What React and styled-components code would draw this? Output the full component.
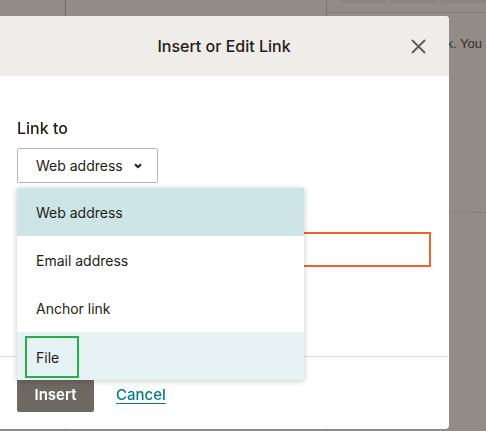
import React from "react";
import styled, { createGlobalStyle } from "styled-components";

const GlobalStyle = createGlobalStyle`
  html, body {
    margin: 0;
    padding: 0;
    height: 100%;
    overflow: hidden;
  }
  body {
    font-family: Inter, "Noto Sans", sans-serif;
    background: #918c88;
    color: #241c15;
  }
`;

const Backdrop = styled.div`
  display: flex;
  height: 100vh;
  background: #918c88;
`;

const Rail = styled.div`
  width: 65px;
  border-right: 1px solid #6f6a66;
`;

const Canvas = styled.div`
  width: 260px;
  border-right: 1px solid #7a7571;
`;

const Aside = styled.div`
  flex: 1;
  display: flex;
  flex-direction: column;
  min-width: 0;
`;

const Toolbar = styled.div`
  height: 12px;
  display: flex;
  gap: 4px;
  padding-left: 15px;
  border-bottom: 1px solid #7f7a76;
`;

const ToolButton = styled.div`
  width: 62px;
  height: 2px;
  background: #8a8581;
  border: 1px solid #84807c;
  border-top: none;
  border-radius: 0 0 3px 3px;
`;

const HelpText = styled.p`
  margin: 21px 0 0;
  padding-right: 4px;
  font: 13px/20px "Liberation Sans", Arial, sans-serif;
  color: #332e2b;
  text-align: right;
  white-space: nowrap;
`;

const DashedRule = styled.div`
  margin-top: 158px;
  border-top: 1px dashed #7c7773;
`;

const Modal = styled.div`
  position: fixed;
  top: 16px;
  left: 0;
  width: 449px;
  height: 413px;
  display: flex;
  flex-direction: column;
  background: #fff;
  border-radius: 0 4px 4px 0;
`;

const Header = styled.div`
  height: 60px;
  flex-shrink: 0;
  display: grid;
  grid-template-columns: 1fr auto 1fr;
  align-items: center;
  padding: 0 23px 0 22px;
  background: #eeede9;
  border-radius: 0 4px 0 0;
`;

const Title = styled.h2`
  grid-column: 2;
  margin: 0;
  font-size: 16px;
  font-weight: 500;
  color: #241c15;
`;

const CloseButton = styled.button`
  grid-column: 3;
  justify-self: end;
  display: flex;
  padding: 0;
  border: none;
  background: none;
  color: #5e5954;
`;

const Body = styled.div`
  flex: 1;
  padding: 40px 17px 0;
`;

const Label = styled.div`
  font-size: 16px;
  line-height: 24px;
  font-weight: 500;
`;

const SelectWrap = styled.div`
  position: relative;
  margin-top: 8px;
`;

const SelectButton = styled.button`
  width: 141px;
  height: 35px;
  display: flex;
  align-items: center;
  gap: 11px;
  padding: 0 0 0 18px;
  background: #fff;
  border: 1px solid #b9b7b4;
  border-radius: 2px;
  font: inherit;
  font-size: 14px;
  color: #241c15;
`;

const Menu = styled.ul`
  position: absolute;
  z-index: 2;
  top: 40px;
  left: 0;
  width: 287px;
  margin: 0;
  padding: 0;
  list-style: none;
  background: #fff;
  box-shadow: 0 1px 6px rgba(0, 0, 0, 0.22);
`;

const MenuItem = styled.li`
  height: 48px;
  display: flex;
  align-items: center;
  padding-left: 19px;
  font-size: 14px;
  color: #241c15;
  background: ${({ $tone }) =>
    $tone === "selected" ? "#cde5e6" : $tone === "hover" ? "#e6f1f3" : "#fff"};
`;

const FocusRing = styled.span`
  display: flex;
  align-items: center;
  width: 41px;
  height: 38px;
  margin: 2px 0 0 -11px;
  padding-left: 9px;
  border: 2px solid #26ae4b;
`;

const TextInput = styled.input`
  display: block;
  box-sizing: border-box;
  width: 414px;
  height: 35px;
  margin-top: 49px;
  border: 2px solid #f0622a;
  outline: none;
  font: inherit;
`;

const Footer = styled.div`
  display: flex;
  align-items: center;
  gap: 22px;
  padding: 20px 17px 17px;
  border-top: 1px solid #dcdad6;
`;

const PrimaryButton = styled.button`
  width: 77px;
  height: 35px;
  border: none;
  border-radius: 2px;
  background: #6e6863;
  color: #fff;
  font: inherit;
  font-size: 15px;
  font-weight: 600;
`;

const TextLink = styled.a`
  color: #007c89;
  font-size: 15px;
  font-weight: 500;
  text-decoration: underline;
  text-underline-offset: 3px;
`;

const options = [
  { label: "Web address", tone: "selected" },
  { label: "Email address" },
  { label: "Anchor link" },
  { label: "File", tone: "hover", focused: true },
];

export default function App() {
  return (
    <>
      <GlobalStyle />
      <Backdrop>
        <Rail />
        <Canvas />
        <Aside>
          <Toolbar>
            <ToolButton />
            <ToolButton />
            <ToolButton />
          </Toolbar>
          <HelpText>Add a link. You</HelpText>
          <DashedRule />
        </Aside>
      </Backdrop>

      <Modal role="dialog">
        <Header>
          <Title>Insert or Edit Link</Title>
          <CloseButton aria-label="Close">
            <svg width="15" height="15" viewBox="0 0 15 15" fill="none">
              <path d="M1 1l13 13M14 1L1 14" stroke="currentColor" strokeWidth="1.8" />
            </svg>
          </CloseButton>
        </Header>
        <Body>
          <Label>Link to</Label>
          <SelectWrap>
            <SelectButton>
              Web address
              <svg width="8" height="6" viewBox="0 0 8 6" fill="none">
                <path d="M1 1.2l3 3 3-3" stroke="#241c15" strokeWidth="2" />
              </svg>
            </SelectButton>
            <Menu>
              {options.map((o) => (
                <MenuItem key={o.label} $tone={o.tone}>
                  {o.focused ? <FocusRing>{o.label}</FocusRing> : o.label}
                </MenuItem>
              ))}
            </Menu>
          </SelectWrap>
          <TextInput aria-label="Web address" />
        </Body>
        <Footer>
          <PrimaryButton>Insert</PrimaryButton>
          <TextLink href="#">Cancel</TextLink>
        </Footer>
      </Modal>
    </>
  );
}
